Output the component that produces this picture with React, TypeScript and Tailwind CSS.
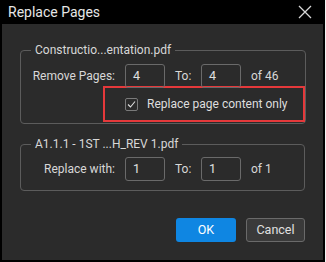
import React from 'react';

const font = { fontFamily: 'Roboto, "Liberation Sans", sans-serif' };

const PageInput: React.FC<{ value: string }> = ({ value }) => (
  <div className="w-[40px] h-[24px] border border-[#6a6a6a] rounded-[3px] flex items-center pl-[7px] text-[12.5px] text-[#e0e0e0]">
    {value}
  </div>
);

const RangeRow: React.FC<{ label: string; from: string; to: string; total: string }> = ({ label, from, to, total }) => (
  <div className="flex items-center pl-[4px] h-[24px]">
    <span className="w-[90px] text-right mr-[10px]">{label}</span>
    <PageInput value={from} />
    <span className="ml-[10px] w-[26px]">To:</span>
    <PageInput value={to} />
    <span className="ml-[10px]">{total}</span>
  </div>
);

const App: React.FC = () => {
  return (
    <div className="w-[326px] h-[262px] bg-[#f2f2f2] flex" style={font}>
      <div className="w-[325px] h-[262px] bg-[#2b2b2b] border-x-2 border-b-2 border-black flex flex-col text-[12px] text-[#d8d8d8]">
        <div className="h-[24px] shrink-0 bg-black flex items-center justify-between pl-[6px] pr-[11px]">
          <span className="text-[14px] text-[#e6e6e6]">Replace Pages</span>
          <svg width="14" height="14" viewBox="0 0 14 14" fill="none" stroke="#d8d8d8" strokeWidth="1.3">
            <path d="M1 1L13 13M13 1L1 13" />
          </svg>
        </div>

        <div className="flex flex-col px-[18px] pt-[18px]">
          <fieldset className="border border-[#5c5c5c] rounded-[4px] pb-[1px]">
            <legend className="ml-[10px] px-[4px] leading-4">Constructio...entation.pdf</legend>
            <div className="mt-[6px]">
              <RangeRow label="Remove Pages:" from="4" to="4" total="of 46" />
            </div>
            <div className="ml-[82px] -mt-[2px] w-[202px] h-[36px] border-2 border-[#e5393b] flex items-center pl-[20px]">
              <span className="w-[13px] h-[13px] border border-[#7a7a7a] rounded-[2px] flex items-center justify-center">
                <svg width="11" height="11" viewBox="0 0 11 11" fill="none" stroke="#e0e0e0" strokeWidth="1.1">
                  <path d="M2 5.5L4.5 8L9 2.5" />
                </svg>
              </span>
              <span className="ml-[9px] text-[#dedede]">Replace page content only</span>
            </div>
          </fieldset>

          <fieldset className="mt-[12px] border border-[#5c5c5c] rounded-[4px] pb-[9px]">
            <legend className="ml-[10px] px-[4px] leading-4">A1.1.1 - 1ST ...H_REV 1.pdf</legend>
            <div className="mt-[5px]">
              <RangeRow label="Replace with:" from="1" to="1" total="of 1" />
            </div>
          </fieldset>

          <div className="flex justify-end gap-[10px] mt-[27px]">
            <button className="w-[60px] h-[24px] rounded-[3px] bg-[#0f86e2] text-white text-[12.5px]">OK</button>
            <button className="w-[59px] h-[24px] rounded-[3px] bg-[#3a3a3a] border border-[#6a6a6a] text-[#e0e0e0] text-[12.5px]">Cancel</button>
          </div>
        </div>
      </div>
    </div>
  );
};

export default App;
